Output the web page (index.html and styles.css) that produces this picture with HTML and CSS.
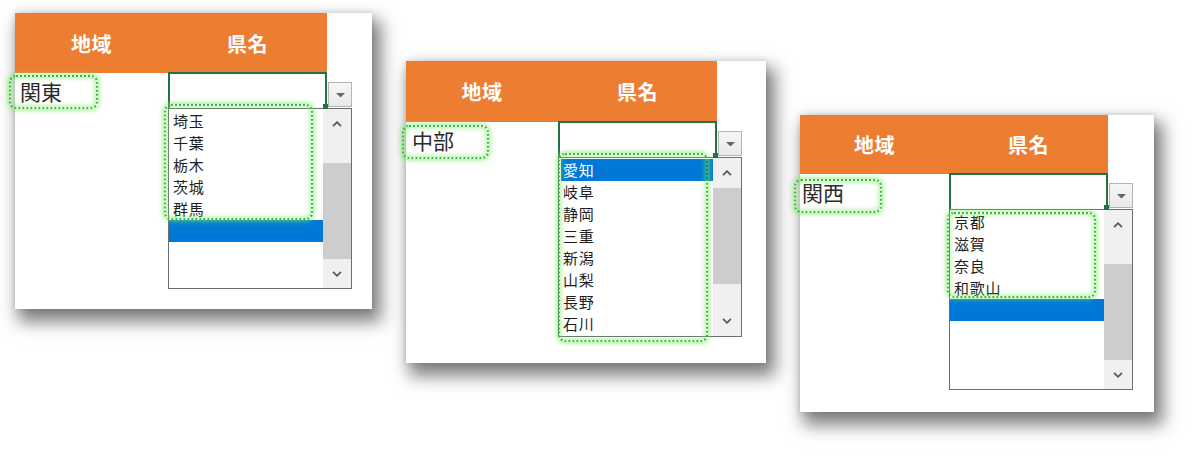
FILE: index.html
```html
<!DOCTYPE html>
<html lang="ja">
<head>
<meta charset="utf-8">
<title>地域・県名</title>
<link rel="stylesheet" href="styles.css">
</head>
<body>
<div class="canvas">

  <section class="card card--kanto">
    <div class="head"><div class="hc hc1">地域</div><div class="hc hc2">県名</div></div>
    <div class="body">
      <div class="region">関東</div>
      <div class="combo">
        <div class="inrow">
          <div class="input"><span class="handle"></span></div>
          <div class="btn"><svg width="9" height="5" viewBox="0 0 9 5"><polygon points="0,0 9,0 4.5,4.5" fill="#666"/></svg></div>
        </div>
        <div class="list">
          <div class="items">
            <div class="item">埼玉</div>
            <div class="item">千葉</div>
            <div class="item">栃木</div>
            <div class="item">茨城</div>
            <div class="item">群馬</div>
            <div class="item sel"></div>
          </div>
          <div class="scroll">
            <div class="sb-btn"><svg width="10" height="6" viewBox="0 0 10 6"><polyline points="1,5.2 5,1.2 9,5.2" fill="none" stroke="#555" stroke-width="1.7"/></svg></div>
            <div class="track"><div class="thumb"></div></div>
            <div class="sb-btn"><svg width="10" height="6" viewBox="0 0 10 6"><polyline points="1,0.8 5,4.8 9,0.8" fill="none" stroke="#555" stroke-width="1.7"/></svg></div>
          </div>
        </div>
      </div>
    </div>
    <div class="hl hl-region"></div>
    <div class="hl hl-items"></div>
  </section>

  <section class="card card--chubu">
    <div class="head"><div class="hc hc1">地域</div><div class="hc hc2">県名</div></div>
    <div class="body">
      <div class="region">中部</div>
      <div class="combo">
        <div class="inrow">
          <div class="input"><span class="handle"></span></div>
          <div class="btn"><svg width="9" height="5" viewBox="0 0 9 5"><polygon points="0,0 9,0 4.5,4.5" fill="#666"/></svg></div>
        </div>
        <div class="list">
          <div class="items">
            <div class="item sel sel--inset">愛知</div>
            <div class="item">岐阜</div>
            <div class="item">静岡</div>
            <div class="item">三重</div>
            <div class="item">新潟</div>
            <div class="item">山梨</div>
            <div class="item">長野</div>
            <div class="item">石川</div>
          </div>
          <div class="scroll">
            <div class="sb-btn"><svg width="10" height="6" viewBox="0 0 10 6"><polyline points="1,5.2 5,1.2 9,5.2" fill="none" stroke="#555" stroke-width="1.7"/></svg></div>
            <div class="track"><div class="thumb"></div></div>
            <div class="sb-btn"><svg width="10" height="6" viewBox="0 0 10 6"><polyline points="1,0.8 5,4.8 9,0.8" fill="none" stroke="#555" stroke-width="1.7"/></svg></div>
          </div>
        </div>
      </div>
    </div>
    <div class="hl hl-region"></div>
    <div class="hl hl-items"></div>
  </section>

  <section class="card card--kansai">
    <div class="head"><div class="hc hc1">地域</div><div class="hc hc2">県名</div></div>
    <div class="body">
      <div class="region">関西</div>
      <div class="combo">
        <div class="inrow">
          <div class="input"><span class="handle"></span></div>
          <div class="btn"><svg width="9" height="5" viewBox="0 0 9 5"><polygon points="0,0 9,0 4.5,4.5" fill="#666"/></svg></div>
        </div>
        <div class="list">
          <div class="items">
            <div class="item">京都</div>
            <div class="item">滋賀</div>
            <div class="item">奈良</div>
            <div class="item">和歌山</div>
            <div class="item sel"></div>
          </div>
          <div class="scroll">
            <div class="sb-btn"><svg width="10" height="6" viewBox="0 0 10 6"><polyline points="1,5.2 5,1.2 9,5.2" fill="none" stroke="#555" stroke-width="1.7"/></svg></div>
            <div class="track"><div class="thumb"></div></div>
            <div class="sb-btn"><svg width="10" height="6" viewBox="0 0 10 6"><polyline points="1,0.8 5,4.8 9,0.8" fill="none" stroke="#555" stroke-width="1.7"/></svg></div>
          </div>
        </div>
      </div>
    </div>
    <div class="hl hl-region"></div>
    <div class="hl hl-items"></div>
  </section>

</div>
</body>
</html>
```

FILE: styles.css
```css
* { box-sizing: border-box; }

html, body {
  margin: 0;
  padding: 0;
  background: #ffffff;
}

body {
  width: 1200px;
  height: 461px;
  overflow: hidden;
  font-family: "Noto Sans CJK JP", "Noto Sans", sans-serif;
  color: #262626;
}

.canvas {
  display: flex;
  align-items: flex-start;
  gap: 34px;
  padding-left: 15px;
}

/* ---------- card ---------- */
.card {
  --c1: 153px;
  --rx: 5px;
  --list-h: 181px;
  --thumb-off: 24px;
  position: relative;
  background: #fff;
  box-shadow: 6px 10px 16px 3px rgba(0, 0, 0, 0.5), 0 0 6px rgba(0, 0, 0, 0.14);
}

.card--kanto  { width: 357px; height: 296px; margin-top: 13px; }
.card--chubu  { width: 360px; height: 302px; margin-top: 61px; --c1: 152px; --rx: 6px; --list-h: 180px; --thumb-off: 0px; }
.card--kansai { width: 354px; height: 297px; margin-top: 115px; --c1: 149px; --rx: 2px; }

.head {
  display: flex;
  width: fit-content;
  height: 60px;
  background: #ed7d31;
}
.card--chubu .head { height: 61px; }
.card--kansai .head { height: 59px; }

.hc {
  display: flex;
  align-items: center;
  justify-content: center;
  color: #fff;
  font-weight: 700;
  font-size: 20px;
  letter-spacing: 0.5px;
}
.hc1 { width: var(--c1); }
.hc2 { width: 159px; }

.body {
  display: flex;
  align-items: flex-start;
}

.region {
  width: var(--c1);
  padding: 5px 0 0 var(--rx);
  font-size: 21px;
  line-height: 26px;
  color: #2a2a2a;
}

/* ---------- combo ---------- */
.combo {
  display: flex;
  flex-direction: column;
  margin-top: -1px;
  width: 184px;
}

.inrow {
  display: flex;
  align-items: flex-end;
}

.input {
  position: relative;
  width: 159px;
  height: 36px;
  background: #fff;
  border: 2px solid #217346;
  border-bottom: none;
}

.handle {
  position: absolute;
  right: -3px;
  bottom: -1px;
  width: 5px;
  height: 5px;
  background: #217346;
  z-index: 2;
}

.btn {
  width: 24px;
  height: 25px;
  margin-left: 1px;
  margin-bottom: 1px;
  background: linear-gradient(#f6f6f6, #e9e9e9);
  border: 1px solid #b4b4b4;
  display: flex;
  align-items: center;
  justify-content: center;
}
.btn svg { display: block; margin-top: 1px; }

.list {
  display: flex;
  height: var(--list-h);
  border: 1px solid #6e6e6e;
  background: #fff;
}

.items {
  flex: 1;
  overflow: hidden;
  padding-top: 1px;
}

.item {
  height: 22px;
  line-height: 22px;
  padding-left: 4px;
  font-size: 15px;
  letter-spacing: 0.8px;
  color: #1e1e1e;
  white-space: nowrap;
}

.item.sel {
  background: #0078d7;
  color: #fff;
}
.sel--inset { margin-left: 2px; padding-left: 2px; }

.scroll {
  width: 28px;
  display: flex;
  flex-direction: column;
  background: #f0f0f0;
}

.sb-btn {
  height: 30px;
  display: flex;
  align-items: center;
  justify-content: center;
  flex: none;
}
.sb-btn svg { display: block; }

.track {
  flex: 1;
}

.thumb {
  height: 96px;
  margin-top: var(--thumb-off);
  background: #cdcdcd;
}

/* ---------- green dotted highlights (annotation overlay) ---------- */
.hl {
  position: absolute;
  border: 2px dotted #2fbf3a;
  border-radius: 7px;
  box-shadow: 0 0 5px 1px rgba(120, 235, 90, 0.75), inset 0 0 5px 1px rgba(120, 235, 90, 0.6);
  pointer-events: none;
  z-index: 5;
}

.card--kanto .hl-region  { left: -6px; top: 62px; width: 89px; height: 34px; }
.card--kanto .hl-items   { left: 149px; top: 91px; width: 149px; height: 116px; }

.card--chubu .hl-region  { left: -4px; top: 64px; width: 87px; height: 34px; }
.card--chubu .hl-items   { left: 152px; top: 92px; width: 150px; height: 189px; }

.card--kansai .hl-region { left: -6px; top: 64px; width: 88px; height: 34px; }
.card--kansai .hl-items  { left: 147px; top: 97px; width: 149px; height: 86px; }
```
